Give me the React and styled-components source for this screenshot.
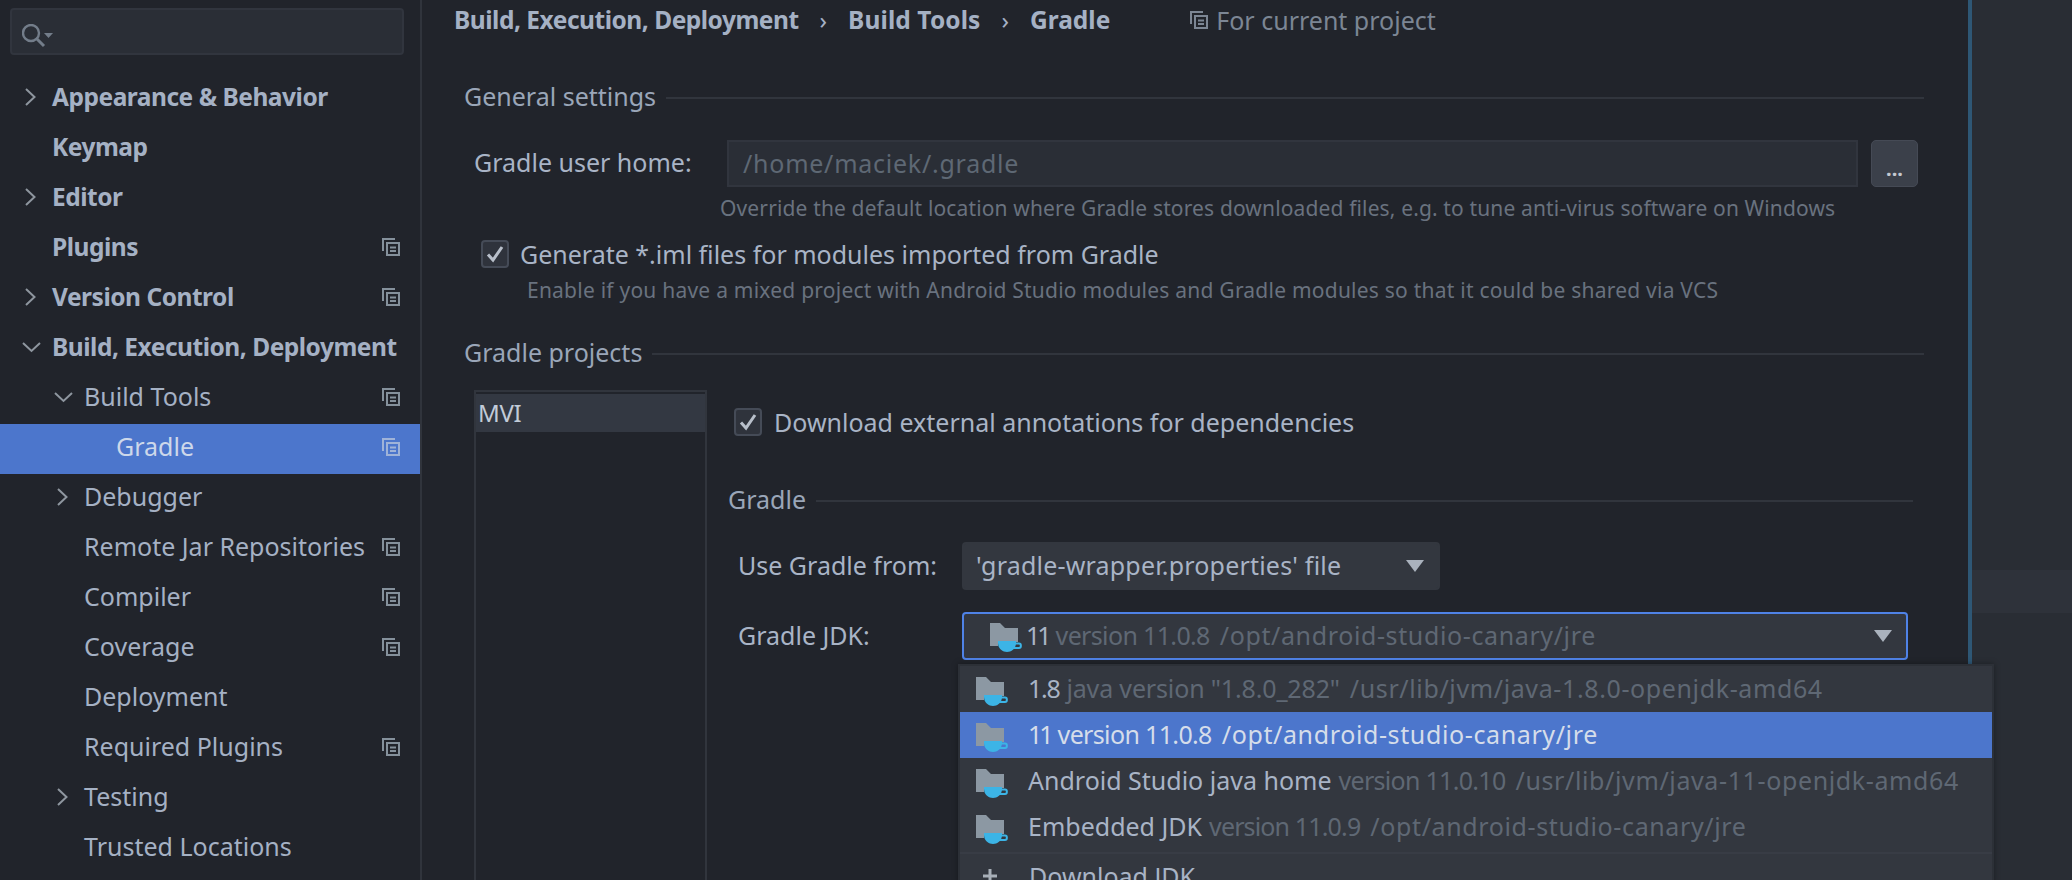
import React from "react";
import styled, { createGlobalStyle } from "styled-components";

const GlobalStyle = createGlobalStyle`
  html, body {
    margin: 0;
    padding: 0;
    background: #21242b;
  }
  body {
    font-family: "Noto Sans", "Open Sans", sans-serif;
    font-size: 25px;
    color: #a9b4c6;
  }
`;

const SIDEBAR_ITEMS = [
  { label: "Appearance & Behavior", bold: true, arrow: "right" },
  { label: "Keymap", bold: true },
  { label: "Editor", bold: true, arrow: "right" },
  { label: "Plugins", bold: true, shared: true },
  { label: "Version Control", bold: true, arrow: "right", shared: true },
  { label: "Build, Execution, Deployment", bold: true, arrow: "down" },
  { label: "Build Tools", level: 1, arrow: "down", shared: true },
  { label: "Gradle", level: 2, selected: true, shared: true },
  { label: "Debugger", level: 1, arrow: "right" },
  { label: "Remote Jar Repositories", level: 1, shared: true },
  { label: "Compiler", level: 1, shared: true },
  { label: "Coverage", level: 1, shared: true },
  { label: "Deployment", level: 1 },
  { label: "Required Plugins", level: 1, shared: true },
  { label: "Testing", level: 1, arrow: "right" },
  { label: "Trusted Locations", level: 1 },
];

const CURRENT_JDK = {
  name: "11",
  nameSpacing: -3,
  version: "version 11.0.8",
  versionSpacing: -0.65,
  path: "/opt/android-studio-canary/jre",
};

const JDKS = [
  {
    name: "1.8",
    nameSpacing: -1.3,
    version: 'java version "1.8.0_282"',
    versionSpacing: -0.15,
    path: "/usr/lib/jvm/java-1.8.0-openjdk-amd64",
  },
  { ...CURRENT_JDK, selected: true },
  {
    name: "Android Studio java home",
    version: "version 11.0.10",
    versionSpacing: -0.7,
    path: "/usr/lib/jvm/java-11-openjdk-amd64",
  },
  {
    name: "Embedded JDK",
    version: "version 11.0.9",
    versionSpacing: -0.85,
    path: "/opt/android-studio-canary/jre",
  },
];

function Chevron({ down }) {
  return (
    <svg width="14" height="18" viewBox="0 0 14 18" fill="none" stroke="#8e969f" strokeWidth="2" overflow="visible">
      {down ? <path d="M-1 5 L7.5 13 L16 5" /> : <path d="M2 1 L10.5 9 L2 17" />}
    </svg>
  );
}

function SharedIcon({ color = "#85919c", size = 18 }) {
  return (
    <svg width={size} height={size} viewBox="0 0 18 18" fill="none" stroke={color} strokeWidth="2">
      <path d="M1 13 V1 H13" />
      <path d="M5 5 H17 V17 H5 Z" />
      <path d="M8 9.5 H14 M8 13 H14" />
    </svg>
  );
}

function SearchIcon() {
  return (
    <svg width="32" height="24" viewBox="0 0 32 24" fill="none">
      <circle cx="9" cy="9" r="8" stroke="#737d8a" strokeWidth="2.4" />
      <path d="M15 15 L22 22" stroke="#737d8a" strokeWidth="3" />
      <path d="M22 9 H31 L26.5 14 Z" fill="#737d8a" />
    </svg>
  );
}

function CheckMark() {
  return (
    <svg width="18" height="18" viewBox="0 0 18 18" fill="none" stroke="#b8bfca" strokeWidth="3">
      <path d="M2 9.5 L7 15 L16 2" />
    </svg>
  );
}

function JdkIcon() {
  return (
    <svg width="32" height="30" viewBox="0 0 32 30">
      <path d="M0 0 H10 L15 5 H28 V19 H8 V23 H0 Z" fill="#8c98a3" />
      <path d="M8 18 H26 V20 C26 26 21 29 17 29 C13 29 8 26 8 20 Z" fill="#3cb4e6" />
      <path d="M25 20.5 H29 C31.5 20.5 31.5 25 29 25 H23" fill="none" stroke="#3cb4e6" strokeWidth="2" />
    </svg>
  );
}

function Caret() {
  return (
    <svg width="18" height="12" viewBox="0 0 18 12">
      <path d="M0 0 H18 L9 12 Z" fill="#aab2bd" />
    </svg>
  );
}

function PlusIcon() {
  return (
    <svg width="14" height="14" viewBox="0 0 14 14" fill="none" stroke="#a8afb8" strokeWidth="3">
      <path d="M7 0 V14 M0 7 H14" />
    </svg>
  );
}

const Page = styled.div`
  display: flex;
  width: 2072px;
  height: 880px;
  overflow: hidden;
  background: #21242b;
`;

const Sidebar = styled.nav`
  flex: 0 0 420px;
  border-right: 2px solid #30343c;
  display: flex;
  flex-direction: column;
  padding-top: 8px;
`;

const SearchBox = styled.div`
  box-sizing: border-box;
  width: 394px;
  height: 47px;
  margin: 0 0 19px 10px;
  padding: 11px 0 0 10px;
  background: #2a2e36;
  border: 2px solid #31353e;
  border-radius: 4px;
`;

const TreeRow = styled.div`
  flex: 0 0 50px;
  box-sizing: border-box;
  height: 50px;
  display: flex;
  align-items: center;
  background: ${(p) => (p.$selected ? "#4c76cc" : "transparent")};
  color: ${(p) => (p.$selected ? "#cdd8ea" : "#a5b1c4")};
  padding: 0 20px 5px ${(p) => 52 + (p.$level || 0) * 32}px;
  position: relative;
`;

const TreeLabel = styled.span`
  flex: 1;
  padding-bottom: ${(p) => (p.$bold ? "0" : "2px")};
  font-size: ${(p) => (p.$bold ? "24.5px" : "25px")};
  font-weight: ${(p) => (p.$bold ? 700 : 400)};
  letter-spacing: ${(p) => (p.$bold ? "-0.48px" : "0")};
  white-space: nowrap;
`;

const ArrowSlot = styled.span`
  position: absolute;
  left: ${(p) => 24 + (p.$level || 0) * 32}px;
  top: 14px;
  display: flex;
`;

const Main = styled.main`
  flex: 0 0 1546px;
  display: flex;
  flex-direction: column;
  box-sizing: border-box;
  padding: 0 44px 0 32px;
`;

const Breadcrumb = styled.div`
  box-sizing: border-box;
  height: 42px;
  padding-bottom: 3px;
  display: flex;
  align-items: center;
  color: #a5b1c4;
  white-space: nowrap;
`;

const Crumb = styled.span`
  font-size: 24.5px;
  font-weight: 700;
  letter-spacing: ${(p) => p.$spacing}px;
`;

const CrumbSep = styled.span`
  font-size: 24px;
  color: #a5b1c4;
  margin: 0 21px;
`;

const ProjectNote = styled.span`
  display: flex;
  align-items: center;
  gap: 8px;
  margin-left: 80px;
  font-size: 25px;
  color: #7c8694;
`;

const GroupTitle = styled.div`
  display: flex;
  align-items: center;
  height: 30px;
  margin: ${(p) => p.$top}px ${(p) => p.$right || 0}px 0 ${(p) => p.$left ?? 10}px;
  color: #9aa6b8;
  white-space: nowrap;

  &::after {
    content: "";
    flex: 1;
    height: 2px;
    margin: 2px 0 0 10px;
    background: #31353d;
  }
`;

const GroupText = styled.span`
  font-size: 25px;
  padding-bottom: 3px;
`;

const FieldRow = styled.div`
  display: flex;
  align-items: center;
  margin: ${(p) => p.$top}px 0 0 ${(p) => p.$left}px;
`;

const FieldLabel = styled.label`
  flex: 0 0 ${(p) => p.$width}px;
  padding-bottom: 3px;
  font-size: 25px;
  color: #a9b4c6;
  white-space: nowrap;
`;

const PathInput = styled.div`
  box-sizing: border-box;
  width: 1131px;
  height: 47px;
  display: flex;
  align-items: center;
  padding: 0 0 2px 14px;
  background: #2a2e36;
  border: 2px solid #31353e;
  font-size: 25px;
  letter-spacing: 0.75px;
  color: #5e6874;
`;

const DotsButton = styled.button`
  box-sizing: border-box;
  width: 47px;
  height: 47px;
  margin-left: 13px;
  padding: 10px 0 0;
  background: #3b404a;
  border: 1px solid #454a55;
  border-radius: 5px;
  font-family: inherit;
  font-size: 20px;
  font-weight: 700;
  color: #c3c8d0;
`;

const Hint = styled.div`
  height: 26px;
  line-height: 26px;
  margin: ${(p) => p.$top}px 0 0 ${(p) => p.$left}px;
  font-size: 21px;
  letter-spacing: ${(p) => p.$spacing}px;
  color: #69727f;
  white-space: nowrap;
`;

const CheckRow = styled.div`
  display: flex;
  align-items: center;
  height: 28px;
  gap: ${(p) => p.$gap}px;
  margin: ${(p) => p.$top}px 0 0 ${(p) => p.$left}px;
  font-size: 25px;
  color: #a9b4c6;
  white-space: nowrap;
`;

const CheckBox = styled.span`
  box-sizing: border-box;
  flex: 0 0 28px;
  height: 28px;
  display: flex;
  align-items: center;
  justify-content: center;
  background: #2f333c;
  border: 2px solid #454b57;
  border-radius: 4px;
`;

const Projects = styled.div`
  display: flex;
  flex: 1;
  margin: 22px 0 0 20px;
  gap: 21px;
`;

const ProjectList = styled.div`
  box-sizing: border-box;
  flex: 0 0 233px;
  padding-top: 2px;
  border: 2px solid #31353d;
  border-bottom: 0;
`;

const ProjectItem = styled.div`
  height: 38px;
  display: flex;
  align-items: center;
  padding: 0 0 2px 2px;
  box-sizing: border-box;
  background: #333842;
  font-size: 24px;
  letter-spacing: -0.3px;
  color: #c2cbd8;
`;

const ProjectPane = styled.div`
  flex: 1;
  display: flex;
  flex-direction: column;
`;

const Combo = styled.div`
  box-sizing: border-box;
  width: ${(p) => p.$width}px;
  height: 48px;
  display: flex;
  align-items: center;
  padding: 0 14px 0 12px;
  background: #33373f;
  border: 2px solid ${(p) => (p.$focused ? "#4f82e6" : "#33373f")};
  border-radius: 4px;
  font-size: 25px;
  color: #a9b4c6;
  white-space: nowrap;
  position: relative;
`;

const ComboText = styled.span`
  flex: 1;
  display: flex;
  padding-bottom: 3px;
  letter-spacing: ${(p) => p.$spacing || 0}px;
`;

const ComboIcon = styled.span`
  display: flex;
  margin: 4px 4px 0 14px;
`;

const JdkName = styled.span`
  letter-spacing: ${(p) => p.$spacing || 0}px;
`;

const JdkVersion = styled.span`
  margin-left: 7px;
  color: ${(p) => (p.$plain ? "inherit" : "#5f6874")};
  letter-spacing: ${(p) => p.$spacing}px;
`;

const JdkPath = styled.span`
  margin-left: 10px;
  color: ${(p) => (p.$plain ? "inherit" : "#5f6874")};
  letter-spacing: 0.62px;
`;

const Popup = styled.div`
  position: absolute;
  left: -6px;
  top: 50px;
  width: 1036px;
  height: 220px;
  box-sizing: border-box;
  background: #33373f;
  border: 2px solid #2c3037;
  border-bottom: 0;
  box-shadow: 0 0 6px rgba(0, 0, 0, 0.35);
  z-index: 2;
`;

const PopupRow = styled.div`
  box-sizing: border-box;
  height: 46px;
  display: flex;
  align-items: center;
  gap: 20px;
  padding: 0 0 3px 16px;
  background: ${(p) => (p.$selected ? "#4c76cc" : "transparent")};
  color: ${(p) => (p.$selected ? "#d5ddea" : "#a9b4c6")};
  font-size: 25px;
`;

const RowIcon = styled.span`
  display: flex;
  margin-top: 8px;
`;

const PopupDivider = styled.div`
  height: 2px;
  margin-top: 2px;
  background: #383c45;
`;

const DownloadRow = styled(PopupRow)`
  gap: 32px;
  padding-left: 23px;
`;

const Edge = styled.div`
  flex: 0 0 4px;
  background: #2e5775;
`;

const SideStrip = styled.aside`
  flex: 1;
  background: #292d34;
  padding-top: 570px;
`;

const StripBand = styled.div`
  height: 43px;
  background: #2e323a;
`;

function JdkLabel({ jdk, plain }) {
  return (
    <>
      <JdkName $spacing={jdk.nameSpacing}>{jdk.name}</JdkName>
      <JdkVersion $plain={plain} $spacing={jdk.versionSpacing}>
        {jdk.version}
      </JdkVersion>
      <JdkPath $plain={plain}>{jdk.path}</JdkPath>
    </>
  );
}

export default function App() {
  return (
    <>
      <GlobalStyle />
      <Page>
        <Sidebar>
          <SearchBox>
            <SearchIcon />
          </SearchBox>
          {SIDEBAR_ITEMS.map((item) => (
            <TreeRow key={item.label} $level={item.level} $selected={item.selected}>
              {item.arrow && (
                <ArrowSlot $level={item.level}>
                  <Chevron down={item.arrow === "down"} />
                </ArrowSlot>
              )}
              <TreeLabel $bold={item.bold}>{item.label}</TreeLabel>
              {item.shared && <SharedIcon color={item.selected ? "#9fb3d8" : "#85919c"} />}
            </TreeRow>
          ))}
        </Sidebar>

        <Main>
          <Breadcrumb>
            <Crumb $spacing={-0.48}>Build, Execution, Deployment</Crumb>
            <CrumbSep>›</CrumbSep>
            <Crumb $spacing={0.1}>Build Tools</Crumb>
            <CrumbSep>›</CrumbSep>
            <Crumb $spacing={0}>Gradle</Crumb>
            <ProjectNote>
              <SharedIcon color="#7c8694" />
              For current project
            </ProjectNote>
          </Breadcrumb>

          <GroupTitle $top={40}>
            <GroupText>General settings</GroupText>
          </GroupTitle>
          <FieldRow $top={28} $left={20}>
            <FieldLabel $width={253}>Gradle user home:</FieldLabel>
            <PathInput>/home/maciek/.gradle</PathInput>
            <DotsButton>...</DotsButton>
          </FieldRow>
          <Hint $top={8} $left={266} $spacing={0.14}>
            Override the default location where Gradle stores downloaded files, e.g. to tune anti-virus software on Windows
          </Hint>
          <CheckRow $top={19} $left={27} $gap={11}>
            <CheckBox>
              <CheckMark />
            </CheckBox>
            <span>Generate *.iml files for modules imported from Gradle</span>
          </CheckRow>
          <Hint $top={9} $left={73} $spacing={0.23}>
            Enable if you have a mixed project with Android Studio modules and Gradle modules so that it could be shared via VCS
          </Hint>

          <GroupTitle $top={35}>
            <GroupText>Gradle projects</GroupText>
          </GroupTitle>
          <Projects>
            <ProjectList>
              <ProjectItem>MVI</ProjectItem>
            </ProjectList>
            <ProjectPane>
              <CheckRow $top={18} $left={6} $gap={12}>
                <CheckBox>
                  <CheckMark />
                </CheckBox>
                <span>Download external annotations for dependencies</span>
              </CheckRow>
              <GroupTitle $top={49} $left={0} $right={11}>
                <GroupText>Gradle</GroupText>
              </GroupTitle>
              <FieldRow $top={27} $left={10}>
                <FieldLabel $width={224}>Use Gradle from:</FieldLabel>
                <Combo $width={478}>
                  <ComboText $spacing={0.2}>'gradle-wrapper.properties' file</ComboText>
                  <Caret />
                </Combo>
              </FieldRow>
              <FieldRow $top={22} $left={10}>
                <FieldLabel $width={224}>Gradle JDK:</FieldLabel>
                <Combo $width={946} $focused>
                  <ComboIcon>
                    <JdkIcon />
                  </ComboIcon>
                  <ComboText>
                    <JdkLabel jdk={CURRENT_JDK} />
                  </ComboText>
                  <Caret />
                  <Popup>
                    {JDKS.map((jdk) => (
                      <PopupRow key={jdk.name} $selected={jdk.selected}>
                        <RowIcon>
                          <JdkIcon />
                        </RowIcon>
                        <span>
                          <JdkLabel jdk={jdk} plain={jdk.selected} />
                        </span>
                      </PopupRow>
                    ))}
                    <PopupDivider />
                    <DownloadRow>
                      <PlusIcon />
                      <span>Download JDK</span>
                    </DownloadRow>
                  </Popup>
                </Combo>
              </FieldRow>
            </ProjectPane>
          </Projects>
        </Main>

        <Edge />
        <SideStrip>
          <StripBand />
        </SideStrip>
      </Page>
    </>
  );
}
